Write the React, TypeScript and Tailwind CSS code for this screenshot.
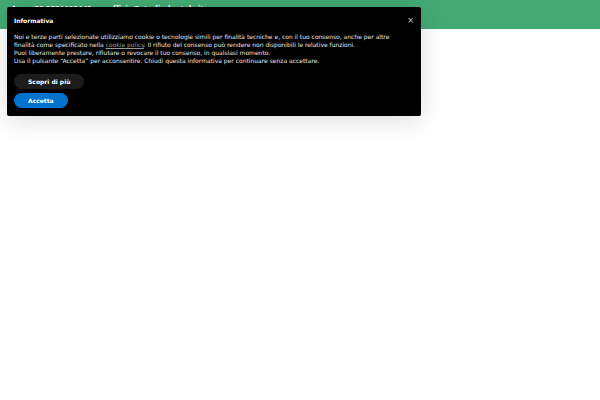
import React, { useState } from 'react';
import { Phone } from 'lucide-react';

function TopBar() {
  return (
    <header className="h-[29px] bg-[#43aa74] text-white px-3 pt-[5px]">
      <div className="flex items-center gap-4 font-['Open_Sans',sans-serif] text-[8px] leading-2 font-bold">
        <a href="tel:+390331180448" className="flex items-center gap-[10px]">
          <Phone className="h-2 w-2 fill-white" strokeWidth={0} />
          +39 0331180448
        </a>
        <a href="mailto:ufficio@studiodentale.it">ufficio@studiodentale.it</a>
      </div>
    </header>
  );
}

function CookieNotice({ onClose }: { onClose: () => void }) {
  return (
    <section
      role="dialog"
      aria-labelledby="notice-title"
      className="absolute left-[7px] top-[7px] w-[69%] rounded-[2px] bg-black px-[7px] pt-[10px] pb-2 text-[6px] leading-2 text-white shadow-[0_4px_24px_rgba(0,0,0,0.14)]"
    >
      <div className="flex items-center justify-between">
        <h2 id="notice-title" className="font-bold">Informativa</h2>
        <button type="button" aria-label="Chiudi" onClick={onClose} className="text-[8px] leading-2 text-gray-300 cursor-pointer">
          ×
        </button>
      </div>

      <div className="mt-2 pr-4 text-gray-200">
        <p>
          Noi e terze parti selezionate utilizziamo cookie o tecnologie simili per finalità tecniche e, con il tuo
          consenso, anche per altre finalità come specificato nella{' '}
          <a href="#cookie-policy" className="text-[#999] underline">cookie policy</a>. Il rifiuto del consenso può
          rendere non disponibili le relative funzioni.
        </p>
        <p>Puoi liberamente prestare, rifiutare o revocare il tuo consenso, in qualsiasi momento.</p>
        <p>Usa il pulsante “Accetta” per acconsentire. Chiudi questa informativa per continuare senza accettare.</p>
      </div>

      <div className="mt-[9px] flex flex-col items-start gap-1 font-bold">
        <button type="button" className="h-[15px] rounded-full bg-[#1c1c1c] px-[14px] cursor-pointer">
          Scopri di più
        </button>
        <button type="button" onClick={onClose} className="h-[15px] rounded-full bg-[#0073ce] px-[14px] cursor-pointer">
          Accetta
        </button>
      </div>
    </section>
  );
}

function App() {
  const [open, setOpen] = useState(true);

  return (
    <div className="relative min-h-screen bg-white font-['DejaVu_Sans',sans-serif]">
      <TopBar />
      {open && <CookieNotice onClose={() => setOpen(false)} />}
    </div>
  );
}

export default App;
